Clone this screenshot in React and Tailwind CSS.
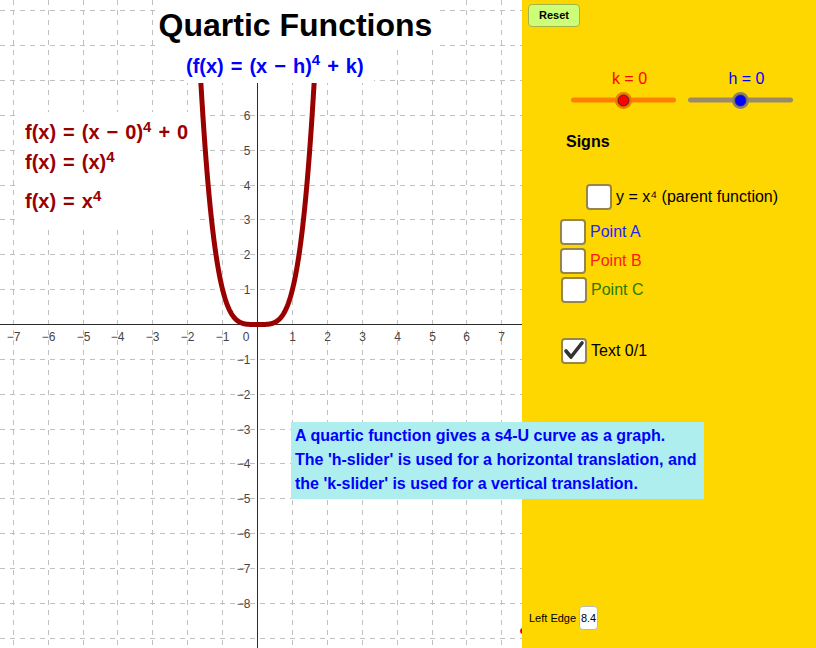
import React from "react";

const OX = 257.5;
const OY = 324.5;
const UX = 34.9;
const UY = 34.87;

function Graph() {
  const vx = [];
  for (let n = -7; n <= 7; n++) if (n !== 0) vx.push({ n, x: Math.round(OX + n * UX - 0.5) + 0.5 });
  const hy = [];
  for (let n = -9; n <= 9; n++) if (n !== 0) hy.push({ n, y: Math.round(OY - n * UY - 0.5) + 0.5 });
  const pts = [];
  for (let t = -1.75; t <= 1.7501; t += 0.005) {
    const py = OY - Math.pow(t, 4) * UY;
    if (py < -20) continue;
    pts.push(`${(OX + t * UX).toFixed(2)},${py.toFixed(2)}`);
  }
  const d = "M" + pts.join(" L");
  return (
    <svg width="522" height="648" className="block">
      <rect width="522" height="648" fill="#ffffff" />
      {vx.map((v) => (
        <line key={"v" + v.n} x1={v.x} x2={v.x} y1="0" y2="648" stroke="#c0c0c0" strokeWidth="1" strokeDasharray="5 5" />
      ))}
      {hy.map((h) => (
        <line key={"h" + h.n} x1="0" x2="522" y1={h.y} y2={h.y} stroke="#c0c0c0" strokeWidth="1" strokeDasharray="5 5" />
      ))}
      <line x1="0" x2="522" y1={OY} y2={OY} stroke="#2b2b2b" strokeWidth="1" />
      <line x1={OX} x2={OX} y1="0" y2="648" stroke="#2b2b2b" strokeWidth="1" />
      {vx.map((v) => (
        <text key={"lx" + v.n} x={v.x} y={OY + 16} fontSize="12" fill="#444" textAnchor="middle" fontFamily="Liberation Sans, Arial, sans-serif">
          {v.n < 0 ? "\u2212" + Math.abs(v.n) : v.n}
        </text>
      ))}
      <text x={OX - 8} y={OY + 16} fontSize="12" fill="#444" textAnchor="end" fontFamily="Liberation Sans, Arial, sans-serif">0</text>
      {hy
        .filter((h) => h.n >= -8 && h.n <= 6)
        .map((h) => (
          <text key={"ly" + h.n} x={OX - 7} y={h.y + 4} fontSize="12" fill="#444" textAnchor="end" fontFamily="Liberation Sans, Arial, sans-serif">
            {h.n < 0 ? "\u2212" + Math.abs(h.n) : h.n}
          </text>
        ))}
      <path d={d} fill="none" stroke="#990000" strokeWidth="5" strokeLinejoin="round" />
      <circle cx="523" cy="631" r="3" fill="#ff0000" />
    </svg>
  );
}

function Op({ c }) {
  return <span className="mx-[7px]">{c}</span>;
}

function Checkbox({ checked }) {
  return (
    <div className="w-[26px] h-[26px] shrink-0 bg-white border-2 border-[#96864a] rounded-[4px] flex items-center justify-center">
      {checked && (
        <svg width="22" height="22" viewBox="0 0 22 22">
          <path d="M3 11 L8 17 L19 3" fill="none" stroke="#333" strokeWidth="3.6" strokeLinecap="round" strokeLinejoin="round" />
        </svg>
      )}
    </div>
  );
}

function Slider({ label, color, line, halo, knob }) {
  return (
    <div className="flex flex-col w-[105px]">
      <div className="text-[16px] leading-[18px] text-center pl-[12px]" style={{ color }}>
        {label}
      </div>
      <svg width="105" height="24" className="block">
        <line x1="2.5" x2="102.5" y1="12" y2="12" stroke={line} strokeWidth="5" strokeLinecap="round" />
        <circle cx="52.5" cy="12.5" r="8.5" fill={halo} />
        <circle cx="52.5" cy="12.5" r="5.5" fill={knob} stroke="#333" strokeWidth="1" />
      </svg>
    </div>
  );
}

export default function App() {
  return (
    <div className="relative w-[816px] h-[648px] overflow-hidden flex bg-white font-['Liberation_Sans',Arial,sans-serif]">
      <div className="relative w-[522px] h-[648px] shrink-0">
        <Graph />
        <div className="absolute left-[155px] top-0 w-[281px] h-[49px] bg-white flex items-center justify-center">
          <span className="text-[32px] font-bold text-black leading-none">Quartic Functions</span>
        </div>
        <div className="absolute left-[184px] top-[48px] w-[190px] h-[35px] bg-white flex items-center pl-[2px]">
          <span className="text-[20px] font-bold text-[#0000ff] leading-none whitespace-nowrap">
            (f(x)<Op c="=" />(x<Op c={"\u2212"} />h)<sup>4</sup><Op c="+" />k)
          </span>
        </div>
        <div className="absolute left-[15px] top-[112px] w-[182px] h-[113px] bg-white flex flex-col pl-[10px] pt-[8px] text-[20px] font-bold text-[#990000] leading-[24px] whitespace-nowrap">
          <div>
            f(x)<Op c="=" />(x<Op c={"\u2212"} />0)<sup>4</sup><Op c="+" />0
          </div>
          <div className="mt-[6px]">
            f(x)<Op c="=" />(x)<sup>4</sup>
          </div>
          <div className="mt-[15px]">
            f(x)<Op c="=" />x<sup>4</sup>
          </div>
        </div>
      </div>

      <div className="flex-1 h-[648px] bg-[#ffd700] flex flex-col">
        <button className="ml-[6px] mt-[4px] w-[52px] h-[23px] bg-[#ccff77] border border-[#a4b24a] rounded-[4px] text-[11px] font-bold text-black flex items-center justify-center">
          Reset
        </button>
        <div className="flex mt-[43px] ml-[49px] gap-[12px]">
          <Slider label="k = 0" color="#ff0000" line="#ff8000" halo="#f07a00" knob="#ff0000" />
          <Slider label="h = 0" color="#0000ff" line="#9b8a6a" halo="#8a8070" knob="#0000ff" />
        </div>
        <div className="ml-[44px] mt-[21px] text-[16px] leading-[18px] font-bold text-black">Signs</div>
        <div className="ml-[64px] mt-[33px] flex items-center gap-[4px]">
          <Checkbox />
          <span className="text-[16px] text-black">y = x⁴ (parent function)</span>
        </div>
        <div className="ml-[38px] mt-[9px] flex items-center gap-[4px]">
          <Checkbox />
          <span className="text-[16px] text-[#1f1fff]">Point A</span>
        </div>
        <div className="ml-[38px] mt-[3px] flex items-center gap-[4px]">
          <Checkbox />
          <span className="text-[16px] text-[#ff1a1a]">Point B</span>
        </div>
        <div className="ml-[39px] mt-[3px] flex items-center gap-[4px]">
          <Checkbox />
          <span className="text-[16px] text-[#2a7b00]">Point C</span>
        </div>
        <div className="ml-[39px] mt-[35px] flex items-center gap-[4px]">
          <Checkbox checked />
          <span className="text-[16px] text-black">Text 0/1</span>
        </div>
        <div className="mt-auto mb-[18px] ml-[7px] flex items-center gap-[3px]">
          <span className="text-[11px] text-black">Left Edge</span>
          <div className="w-[19px] h-[24px] bg-white border border-[#bbbbbb] rounded-[4px] flex items-center justify-center text-[11px] text-black">
            8.4
          </div>
        </div>
      </div>

      <div className="absolute left-[291px] top-[422px] w-[413px] h-[77px] bg-[#afeeee] px-[4px] pt-[2px] text-[16px] leading-[24px] font-bold text-[#0000ff] whitespace-nowrap">
        <div>A quartic function gives a s4-U curve as a graph.</div>
        <div>The 'h-slider' is used for a horizontal translation, and</div>
        <div>the 'k-slider' is used for a vertical translation.</div>
      </div>
    </div>
  );
}
